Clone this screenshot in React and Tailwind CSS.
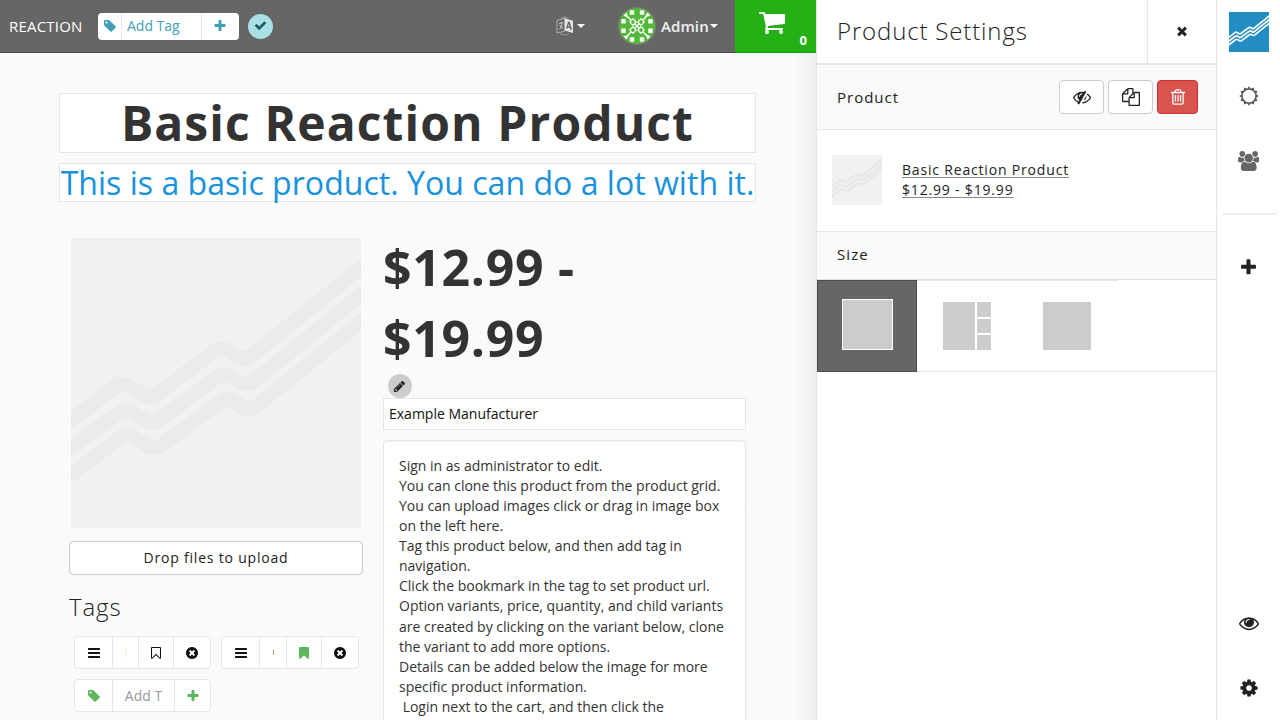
import React from "react";

const P = {
  tag: "M576 448q0-53-37.5-90.5t-90.5-37.5-90.5 37.5-37.5 90.5 37.5 90.5 90.5 37.5 90.5-37.5 37.5-90.5zm1067 576q0 53-37 90l-491 492q-39 37-91 37-53 0-90-37l-715-716q-38-37-64.5-101t-26.5-117v-416q0-52 38-90t90-38h416q53 0 117 26.5t102 64.5l715 714q37 39 37 91z",
  plus: "M1600 736v192q0 40-28 68t-68 28h-416v416q0 40-28 68t-68 28h-192q-40 0-68-28t-28-68v-416h-416q-40 0-68-28t-28-68v-192q0-40 28-68t68-28h416v-416q0-40 28-68t68-28h192q40 0 68 28t28 68v416h416q40 0 68 28t28 68z",
  check: "M1671 566q0 40-28 68l-724 724-136 136q-28 28-68 28t-68-28l-136-136-362-362q-28-28-28-68t28-68l136-136q28-28 68-28t68 28l294 295 656-657q28-28 68-28t68 28l136 136q28 28 28 68z",
  times: "M1490 1322q0 40-28 68l-136 136q-28 28-68 28t-68-28l-294-294-294 294q-28 28-68 28t-68-28l-136-136q-28-28-28-68t28-68l294-294-294-294q-28-28-28-68t28-68l136-136q28-28 68-28t68 28l294 294 294-294q28-28 68-28t68 28l136 136q28 28 28 68t-28 68l-294 294 294 294q28 28 28 68z",
  bars: "M1664 1344v128q0 26-19 45t-45 19h-1408q-26 0-45-19t-19-45v-128q0-26 19-45t45-19h1408q26 0 45 19t19 45zm0-512v128q0 26-19 45t-45 19h-1408q-26 0-45-19t-19-45v-128q0-26 19-45t45-19h1408q26 0 45 19t19 45zm0-512v128q0 26-19 45t-45 19h-1408q-26 0-45-19t-19-45v-128q0-26 19-45t45-19h1408q26 0 45 19t19 45z",
  bookmark: "M1420 128q23 0 44 9 33 13 52.5 41t19.5 62v1289q0 34-19.5 62t-52.5 41q-19 8-44 8-48 0-83-32l-441-424-441 424q-36 33-83 33-23 0-44-9-33-13-52.5-41t-19.5-62v-1289q0-34 19.5-62t52.5-41q21-9 44-9h1048z",
  bookmarkO: "M1408 256h-1024v1242l423-406 89-85 89 85 423 406v-1242zm12-128q23 0 44 9 33 13 52.5 41t19.5 62v1289q0 34-19.5 62t-52.5 41q-19 8-44 8-48 0-83-32l-441-424-441 424q-36 33-83 33-23 0-44-9-33-13-52.5-41t-19.5-62v-1289q0-34 19.5-62t52.5-41q21-9 44-9h1048z",
  timesCircle: "M1277 1122q0-26-19-45l-181-181 181-181q19-19 19-45 0-27-19-46l-90-90q-19-19-46-19-26 0-45 19l-181 181-181-181q-19-19-45-19-27 0-46 19l-90 90q-19 19-19 46 0 26 19 45l181 181-181 181q-19 19-19 45 0 27 19 46l90 90q19 19 46 19 26 0 45-19l181-181 181 181q19 19 45 19 27 0 46-19l90-90q19-19 19-46zm387-226q0 209-103 385.5t-279.5 279.5-385.5 103-385.5-103-279.5-279.5-103-385.5 103-385.5 279.5-279.5 385.5-103 385.5 103 279.5 279.5 103 385.5z",
  trash: "M704 736v576q0 14-9 23t-23 9h-64q-14 0-23-9t-9-23v-576q0-14 9-23t23-9h64q14 0 23 9t9 23zm256 0v576q0 14-9 23t-23 9h-64q-14 0-23-9t-9-23v-576q0-14 9-23t23-9h64q14 0 23 9t9 23zm256 0v576q0 14-9 23t-23 9h-64q-14 0-23-9t-9-23v-576q0-14 9-23t23-9h64q14 0 23 9t9 23zm128 724v-948h-896v948q0 22 7 40.5t14.5 27 10.5 8.5h832q3 0 10.5-8.5t14.5-27 7-40.5zm-672-1076h448l-48-117q-7-9-17-11h-317q-10 2-17 11zm928 32v64q0 14-9 23t-23 9h-96v948q0 83-47 143.5t-113 60.5h-832q-66 0-113-58.5t-47-141.5v-952h-96q-14 0-23-9t-9-23v-64q0-14 9-23t23-9h309l70-167q15-37 54-63t79-26h320q40 0 79 26t54 63l70 167h309q14 0 23 9t9 23z",
  files: "M1696 384q40 0 68 28t28 68v1216q0 40-28 68t-68 28h-960q-40 0-68-28t-28-68v-288h-544q-40 0-68-28t-28-68v-672q0-40 20-88t48-76l408-408q28-28 76-48t88-20h416q40 0 68 28t28 68v328q68-40 128-40h416zm-544 213l-299 299h299v-299zm-640-384l-299 299h299v-299zm196 647l316-316v-416h-384v416q0 40-28 68t-68 28h-416v640h512v-256q0-40 20-88t48-76zm956 804v-1152h-384v416q0 40-28 68t-68 28h-416v640h896z",
  pencil: "M491 1536l91-91-235-235-91 91v107h128v128h107zm523-928q0-22-22-22-10 0-17 7l-542 542q-7 7-7 17 0 22 22 22 10 0 17-7l542-542q7-7 7-17zm-54-192l416 416-832 832h-416v-416zm683 96q0 53-37 90l-166 166-416-416 166-165q36-38 90-38 53 0 91 38l235 234q37 39 37 91z",
  cog: "M1152 896q0-106-75-181t-181-75-181 75-75 181 75 181 181 75 181-75 75-181zm512-109v222q0 12-8 23t-20 13l-185 28q-19 54-39 91 35 50 107 138 10 12 10 25t-9 23q-27 37-99 108t-94 71q-12 0-26-9l-138-108q-44 23-91 38-16 136-29 186-7 28-36 28h-222q-14 0-24.5-8.5t-11.5-21.5l-28-184q-49-16-90-37l-141 107q-10 9-25 9-14 0-25-11-126-114-165-168-7-10-7-23 0-12 8-23 15-21 51-66.5t54-70.5q-27-50-41-99l-183-27q-13-2-21-12.5t-8-23.5v-222q0-12 8-23t19-13l186-28q14-46 39-92-40-57-107-138-10-12-10-24 0-10 9-23 26-36 98.5-107.5t94.5-71.5q13 0 26 10l138 107q44-23 91-38 16-136 29-186 7-28 36-28h222q14 0 24.5 8.5t11.5 21.5l28 184q49 16 90 37l142-107q9-9 24-9 13 0 25 10 129 119 165 170 7 8 7 22 0 12-8 23-15 21-51 66.5t-54 70.5q26 50 41 98l183 28q13 2 21 12.5t8 23.5z",
  eye: "M1664 960q-152-236-381-353 61 104 61 225 0 185-131.5 316.5t-316.5 131.5-316.5-131.5-131.5-316.5q0-121 61-225-229 117-381 353 133 205 333.5 326.5t434.5 121.5 434.5-121.5 333.5-326.5zm-720-384q0-20-14-34t-34-14q-125 0-214.5 89.5t-89.5 214.5q0 20 14 34t34 14 34-14 14-34q0-86 61-147t147-61q20 0 34-14t14-34zm848 384q0 34-20 69-140 230-376.5 368.5t-499.5 138.5-499.5-139-376.5-368q-20-35-20-69t20-69q140-229 376.5-368t499.5-139 499.5 139 376.5 368q20 35 20 69z",
  eyeSlash: "M555 1335l78-141q-87-63-136-159t-49-203q0-121 61-225-229 117-381 353 167 258 427 375zm389-759q0-20-14-34t-34-14q-125 0-214.5 89.5t-89.5 214.5q0 20 14 34t34 14 34-14 14-34q0-86 61-147t147-61q20 0 34-14t14-34zm363-191q0 7-1 9-106 189-316 567t-315 566l-49 89q-10 16-28 16-12 0-134-70-16-10-16-28 0-12 44-87-143-65-263.5-173t-208.5-245q-20-31-20-69t20-69q153-235 380-371t496-136q89 0 180 17l54-97q10-16 28-16 5 0 18 6t31 15.5 33 18.5 31.5 18.5 19.5 11.5q16 10 16 27zm37 447q0 139-79 253.5t-209 164.5l280-502q8 45 8 84zm448 128q0 35-20 69-39 64-109 145-150 172-347.5 267t-419.5 95l74-132q212-18 392.5-137t301.5-307q-115-179-282-294l63-112q95 64 182.5 153t144.5 182q20 34 20 69z",
  users: "M593 896q-162 5-265 128h-134q-82 0-138-40.5t-56-118.5q0-353 124-353 6 0 43.5 21t97.5 42.5 119 21.5q67 0 133-23-5 37-5 66 0 139 81 256zm1071 637q0 120-73 189.5t-194 69.5h-874q-121 0-194-69.5t-73-189.5q0-53 3.5-103.5t14-109 26.5-108.5 43-97.5 62-81 85.5-53.5 111.500-20q10 0 43 21.5t73 48 107 48 135 21.5 135-21.5 107-48 73-48 43-21.5q61 0 111.5 20t85.5 53.5 62 81 43 97.5 26.5 108.5 14 109 3.5 103.5zm-1024-1277q0 106-75 181t-181 75-181-75-75-181 75-181 181-75 181 75 75 181zm704 384q0 159-112.5 271.5t-271.5 112.5-271.5-112.5-112.5-271.5 112.5-271.5 271.5-112.5 271.5 112.5 112.5 271.5zm576 225q0 78-56 118.5t-138 40.5h-134q-103-123-265-128 81-117 81-256 0-29-5-66 66 23 133 23 59 0 119-21.5t97.5-42.5 43.5-21q124 0 124 353zm-128-609q0 106-75 181t-181 75-181-75-75-181 75-181 181-75 181 75 75 181z",
  cart: "M704 1536q0 52-38 90t-90 38-90-38-38-90 38-90 90-38 90 38 38 90zm896 0q0 52-38 90t-90 38-90-38-38-90 38-90 90-38 90 38 38 90zm128-1088v512q0 24-16.5 42.5t-40.5 21.5l-1044 122q13 60 13 70 0 16-24 64h920q26 0 45 19t19 45-19 45-45 19h-1024q-26 0-45-19t-19-45q0-11 8-31.5t16-36 21.5-40 15.5-29.5l-177-823h-204q-26 0-45-19t-19-45 19-45 45-19h256q16 0 28.5 6.5t19.5 15.5 13 24.5 8 26 5.5 29.5 4.5 26h1201q26 0 45 19t19 45z",
};

function Icon({ name, size = 14, className = "" }) {
  const wide = name === "users";
  return (
    <svg
      width={wide ? (size * 15) / 14 : size}
      height={size}
      viewBox={wide ? "0 0 1920 1792" : "0 0 1792 1792"}
      fill="currentColor"
      className={"shrink-0 " + className}
    >
      <path d={P[name]} />
    </svg>
  );
}

const Caret = ({ className = "" }) => (
  <svg width="8" height="4" viewBox="0 0 8 4" fill="currentColor" className={className}>
    <path d="M0 0h8L4 4z" />
  </svg>
);

function Waves({ size, bg, line, stroke = 14.5 }) {
  return (
    <svg width={size} height={size} viewBox="0 0 290 290" className="block shrink-0">
      <rect width="290" height="290" fill={bg} />
      <g fill="none" stroke={line} strokeWidth={stroke} strokeLinejoin="round">
        <path d="M-10 190L43 150Q50 144 57 148L71 156Q79 161 86 156L142 114Q149 108 156 112L165 118Q173 123 180 118L302 20" />
        <path d="M-10 217L46 176Q53 170 60 174L74 182Q81 187 88 182L145 140Q152 134 159 138L168 143Q175 148 183 143L302 47" />
        <path d="M-10 244L48 201Q55 195 62 199L77 208Q84 212 91 207L148 165Q155 159 162 163L170 168Q178 173 185 168L302 74" />
      </g>
    </svg>
  );
}

function Identicon() {
  const squares = [
    [-5, -13.5], [5, -13.5], [-5, 13.5], [5, 13.5],
    [-13.5, -4.7], [13.5, -4.7], [-13.5, 4.7], [13.5, 4.7],
  ];
  return (
    <svg width="40" height="40" viewBox="-20 -20 40 40" className="block shrink-0">
      <circle r="19.300" fill="#787374" />
      <circle r="18" fill="#54b83a" />
      <g fill="#fff">
        {squares.map(([x, y]) => (
          <rect key={x + "/" + y} x={x - 2.2} y={y - 2.2} width="4.400" height="4.400" />
        ))}
        {[0, 90, 180, 270].map((a) => (
          <path key={a} d="M-13.500 -10.500L-10.500 -13.500L-9.300 -9.900L-6.500 -6.500L-10.500 -8.700z" transform={`rotate(${a})`} />
        ))}
      </g>
      <g fill="none" stroke="#fff" strokeWidth="1.200">
        {[[-4, -4], [4, -4], [-4, 4], [4, 4]].map(([x, y]) => (
          <g key={x + "/" + y} transform={`translate(${x} ${y})`}>
            <circle r="2.500" />
            <path d="M0 -2.500v-1.500M0 2.500v1.500M-2.500 0h-1.500M2.500 0h1.500" />
          </g>
        ))}
        <path d="M-2.500 -2.500L2.500 2.500M2.500 -2.500L-2.500 2.500M-6 -6L-9 -9M6 -6L9 -9M-6 6L-9 9M6 6L9 9" />
      </g>
    </svg>
  );
}

const Translate = () => (
  <svg width="18" height="20" viewBox="0 0 18 20" className="block shrink-0">
    <path d="M1 4.500L9 2.200v13L1 17z" fill="#666" stroke="#b5b5b5" strokeWidth="0.900" />
    <path d="M5 2.200Q9 .2 13 1.800" fill="none" stroke="#999" />
    <path d="M8.600 2.300L17 4.800V17l-8.400-2.400z" fill="#e6e6e6" />
    <path d="M3 7.500l4-1M5 6v1.500M3.400 13.500Q6 11.500 6.200 7.200M3.600 9.200Q5 12 7 12.500" fill="none" stroke="#c8c8c8" />
    <path d="M10.600 12.500l2-6h.6l2.100 7.500M11.300 10.800l3.200.7" fill="none" stroke="#666" strokeWidth="1.400" />
    <path d="M4 17.800Q9 20.500 13.500 17.500" fill="none" stroke="#999" />
  </svg>
);

const Sun = () => (
  <svg width="20" height="20" viewBox="-10 -10 20 20" className="block">
    <circle r="7" fill="none" stroke="#555" strokeWidth="1.400" />
    {Array.from({ length: 12 }, (_, i) => (
      <path key={i} d="M-1.800 -7.200L0 -9.800L1.800 -7.200z" fill="#555" transform={`rotate(${i * 30})`} />
    ))}
  </svg>
);

function TagGroup({ widths, children }) {
  return (
    <div className="flex h-[33px] rounded-[4px] border border-[#e6e6e6] bg-white text-[#111]">
      {React.Children.map(children, (c, i) => (
        <div
          className={"flex items-center justify-center overflow-hidden" + (i ? " border-l border-[#e6e6e6]" : "")}
          style={{ width: widths[i] }}
        >
          {c}
        </div>
      ))}
    </div>
  );
}

const LINES = [
  "Sign in as administrator to edit.",
  "You can clone this product from the product grid.",
  "You can upload images click or drag in image box",
  "on the left here.",
  "Tag this product below, and then add tag in",
  "navigation.",
  "Click the bookmark in the tag to set product url.",
  "Option variants, price, quantity, and child variants",
  "are created by clicking on the variant below, clone",
  "the variant to add more options.",
  "Details can be added below the image for more",
  "specific product information.",
  "\u00a0Login next to the cart, and then click the",
];

export default function App() {
  return (
    <div className="flex h-[720px] w-[1280px] overflow-hidden bg-[#fafafa] font-['Open_Sans',sans-serif] text-[14px] leading-[20px] text-[#222]">
      <div className="flex h-full w-[816px] shrink-0 flex-col">
        <header className="flex h-[53px] shrink-0 items-center border-b border-[#4d4d4d] bg-[#666] text-white">
          <div className="w-[98px] shrink-0 pb-px pl-[9px] text-[15px] tracking-[0.2px]">REACTION</div>
          <div className="flex h-[27px] w-[141px] shrink-0 items-stretch rounded-[4px] bg-white text-[#429fba]">
            <div className="flex w-[24px] items-center justify-center border-r border-[#e6e6e6]">
              <Icon name="tag" size={14} />
            </div>
            <div className="flex w-[80px] items-center border-r border-[#e6e6e6] pl-[5px] text-[14px]">Add Tag</div>
            <div className="flex flex-1 items-center justify-center pr-[2px]">
              <Icon name="plus" size={14} />
            </div>
          </div>
          <div className="ml-[9px] flex size-[25px] items-center justify-center rounded-full bg-[#a9e0e6] pb-px text-[#1a5c66]">
            <Icon name="check" size={13} />
          </div>
          <div className="ml-[283px] flex items-center">
            <Translate />
            <Caret className="ml-[3px]" />
          </div>
          <div className="ml-[32px] flex items-center">
            <Identicon />
            <span className="ml-[4px] w-[49px] pb-px text-[15px] font-semibold tracking-[0.1px] whitespace-nowrap text-[#f0f0f0]">
              Admin
            </span>
            <Caret />
          </div>
          <div className="relative ml-auto h-[53px] w-[81px] shrink-0 self-start border-b border-[#159a0b] bg-[#25b116]">
            <Icon name="cart" size={28} className="absolute left-[23px] top-[8px]" />
            <span className="absolute right-[9px] top-[30px] text-[13px] font-bold">0</span>
          </div>
        </header>
        <div className="flex min-h-0 flex-1 bg-linear-to-r from-[#fafafa] from-[97.5%] to-[#eeeeee]">
          <div className="ml-[59px] flex w-[697px] flex-col pt-[40px]">
            <div className="flex h-[60px] shrink-0 items-center justify-center border border-[#e6e6e6] bg-white text-[48px] font-bold leading-[58px] tracking-[1.1px] whitespace-nowrap text-[#333]">
              Basic Reaction Product
            </div>
            <div className="mt-[10px] flex h-[39px] shrink-0 items-center justify-center border border-[#e6e6e6] bg-white text-[32.1px] leading-[37px] whitespace-nowrap text-[#1992dd]">
              This is a basic product. You can do a lot with it.
            </div>
            <div className="flex pt-[36px]">
              <div className="ml-[10px] w-[294px] shrink-0">
                <div className="ml-[2px] w-[290px]">
                  <Waves size={290} bg="#f1f1f1" line="#ebebeb" />
                </div>
                <div className="mt-[13px] flex h-[34px] items-center justify-center rounded-[4px] border border-[#ccc] bg-white tracking-[0.8px]">
                  Drop files to upload
                </div>
                <div className="mt-[17px] text-[24px] font-light leading-[30px] tracking-[0.9px]">Tags</div>
                <div className="ml-[5px] mt-[14px] flex gap-[10px]">
                  <TagGroup widths={[37, 26, 35, 37]}>
                    <Icon name="bars" />
                    <span className="h-[10px] w-px bg-[#fdeacb]" />
                    <Icon name="bookmarkO" />
                    <Icon name="timesCircle" />
                  </TagGroup>
                  <TagGroup widths={[37, 27, 35, 37]}>
                    <Icon name="bars" />
                    <span className="h-[5px] w-px bg-[#cf9272]" />
                    <Icon name="bookmark" className="text-[#5cb85c]" />
                    <Icon name="timesCircle" />
                  </TagGroup>
                </div>
                <div className="ml-[5px] mt-[10px] flex">
                  <TagGroup widths={[37, 62, 36]}>
                    <Icon name="tag" className="text-[#5cb85c]" />
                    <span className="text-[#999]">Add T</span>
                    <Icon name="plus" className="text-[#5cb85c]" />
                  </TagGroup>
                </div>
              </div>
              <div className="ml-[20px] w-[363px] shrink-0">
                <div className="-mt-[6px] text-[50px] font-bold leading-[71px] tracking-[0.7px] text-[#333]">
                  $12.99 -<br />
                  $19.99
                </div>
                <div className="ml-[5px] flex size-[24px] items-center justify-center rounded-full bg-[#ccc] pr-px">
                  <Icon name="pencil" size={13} />
                </div>
                <div className="flex h-[32px] items-center border border-[#e6e6e6] bg-white pl-[5px] text-[#111]">
                  Example Manufacturer
                </div>
                <div className="mt-[10px] h-[300px] rounded-[4px] border border-[#e6e6e6] bg-white pl-[15px] pt-[15px] leading-[20.07px] whitespace-nowrap text-[#333] shadow-[inset_0_1px_1px_rgba(0,0,0,0.05)]">
                  {LINES.map((l) => (
                    <div key={l}>{l}</div>
                  ))}
                </div>
              </div>
            </div>
          </div>
        </div>
      </div>

      <aside className="flex h-full w-[401px] shrink-0 flex-col border-x border-[#e6e6e6] bg-white">
        <div className="flex h-[65px] shrink-0 border-b-2 border-[#e6e6e6]">
          <div className="flex flex-1 items-center pb-[2px] pl-[20px] text-[24px] font-light tracking-[0.85px]">
            Product Settings
          </div>
          <div className="flex w-[69px] items-center justify-center border-l border-[#e6e6e6] pb-px">
            <Icon name="times" />
          </div>
        </div>
        <div className="flex h-[65px] shrink-0 items-center border-b border-[#e6e6e6] bg-[#fafafa] pl-[20px] pr-[18px]">
          <span className="flex-1 text-[15px] tracking-[1px]">Product</span>
          <div className="flex gap-[4px]">
            <button className="flex h-[34px] w-[45px] items-center justify-center rounded-[4px] border border-[#ccc] bg-white">
              <Icon name="eyeSlash" size={18} />
            </button>
            <button className="flex h-[34px] w-[45px] items-center justify-center rounded-[4px] border border-[#ccc] bg-white">
              <Icon name="files" size={18} />
            </button>
            <button className="flex h-[34px] w-[41px] items-center justify-center rounded-[4px] border border-[#cf2f2f] bg-[#d9534f] text-white">
              <Icon name="trash" size={18} />
            </button>
          </div>
        </div>
        <div className="flex h-[102px] shrink-0 items-center border-b border-[#e6e6e6] pb-[2px] pl-[15px]">
          <Waves size={50} bg="#f1f1f1" line="#e8e8e8" />
          <div className="ml-[20px] tracking-[0.82px] underline decoration-[#888] underline-offset-2">
            <div>Basic Reaction Product</div>
            <div>$12.99 - $19.99</div>
          </div>
        </div>
        <div className="flex h-[48px] shrink-0 items-center border-b border-[#e0e0e0] bg-[#fafafa] pb-[3px] pl-[20px] text-[15px] tracking-[1.1px]">
          Size
        </div>
        <div className="flex h-[92px] shrink-0 border-b border-[#e6e6e6]">
          <div className="flex h-[92px] w-[100px] justify-center border border-[#4d4d4d] bg-[#666] pt-[18px]">
            <div className="size-[51px] border border-white bg-[#ccc]" />
          </div>
          <div className="flex w-[100px] justify-center gap-[2px] border-t border-[#e6e6e6] pt-[21px]">
            <div className="h-[48px] w-[32px] bg-[#ccc]" />
            <div className="flex w-[14px] flex-col gap-[2px]">
              <div className="h-[15px] bg-[#ccc]" />
              <div className="h-[14px] bg-[#ccc]" />
              <div className="h-[15px] bg-[#ccc]" />
            </div>
          </div>
          <div className="flex w-[101px] justify-center border-t border-[#e6e6e6] pr-px pt-[21px]">
            <div className="h-[48px] w-[48px] bg-[#ccc]" />
          </div>
        </div>
      </aside>

      <nav className="flex h-full w-[63px] shrink-0 flex-col items-center bg-white">
        <div className="mt-[12px]">
          <Waves size={40} bg="#238cc3" line="#fff" stroke={12} />
        </div>
        <div className="mt-[34px]">
          <Sun />
        </div>
        <Icon name="users" size={20} className="mt-[45px] text-[#666]" />
        <div className="ml-[5px] mt-[42px] h-[2px] w-[55px] self-start bg-[#eee]" />
        <Icon name="plus" size={19} className="mt-[43px]" />
        <Icon name="eye" size={20} className="mt-auto" />
        <Icon name="cog" size={20} className="mb-[22px] mt-[45px]" />
      </nav>
    </div>
  );
}
